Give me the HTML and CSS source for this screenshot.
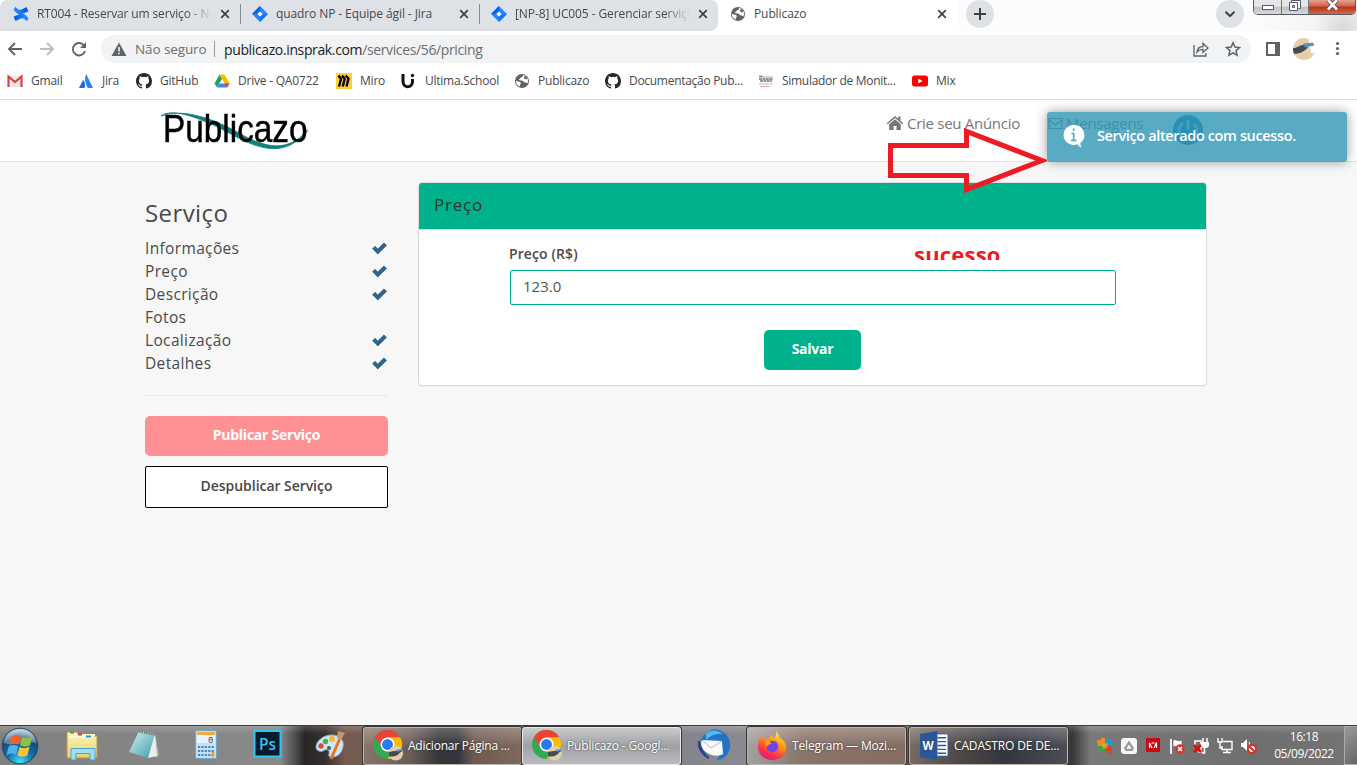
FILE: index.html
```html
<!DOCTYPE html>
<html lang="pt-BR">
<head>
<meta charset="utf-8">
<title>Publicazo</title>
<link rel="stylesheet" href="styles.css">
</head>
<body>
<svg class="defs" width="0" height="0">
  <defs>
    <linearGradient id="jg" x1="0" y1="0" x2="1" y2="1"><stop offset="0" stop-color="#0052cc"/><stop offset="1" stop-color="#2684ff"/></linearGradient>
    <linearGradient id="cg" x1="0" y1="0" x2="1" y2="0"><stop offset="0" stop-color="#0052cc"/><stop offset=".7" stop-color="#2684ff"/></linearGradient>
    <linearGradient id="cg2" x1="1" y1="0" x2="0" y2="0"><stop offset="0" stop-color="#0052cc"/><stop offset=".7" stop-color="#2684ff"/></linearGradient>
    <linearGradient id="folder" x1="0" y1="0" x2="0" y2="1"><stop offset="0" stop-color="#fdf6c4"/><stop offset="1" stop-color="#e8cf68"/></linearGradient>
    <linearGradient id="note" x1="0" y1="0" x2="1" y2="1"><stop offset="0" stop-color="#d5f1f4"/><stop offset="1" stop-color="#3f9bab"/></linearGradient>
    <radialGradient id="orb" cx=".5" cy=".95" r=".9"><stop offset="0" stop-color="#3fe0ff"/><stop offset=".4" stop-color="#1272ad"/><stop offset=".75" stop-color="#174a78"/><stop offset="1" stop-color="#a9c9de"/></radialGradient>
    <linearGradient id="fox" x1=".8" y1="0" x2=".3" y2="1"><stop offset="0" stop-color="#fff44f"/><stop offset=".4" stop-color="#ff980e"/><stop offset=".75" stop-color="#ff3647"/><stop offset="1" stop-color="#e31587"/></linearGradient>
    <symbol id="jira" viewBox="0 0 16 16"><path d="M8 0l8 8-8 8-8-8z" fill="#2684ff"/><path d="M8 0v5L5 8H0zM8 16v-5l3-3h5z" fill="url(#jg)"/><path d="M8 5.400L10.600 8 8 10.600 5.400 8z" fill="#fff"/></symbol>
    <symbol id="close" viewBox="0 0 10 10"><path d="M1.200 1.200l7.600 7.600M8.800 1.200L1.200 8.800" stroke="#3c4043" stroke-width="1.700"/></symbol>
    <symbol id="globe" viewBox="0 0 16 16"><circle cx="8" cy="8" r="7" fill="#5f6368"/><path d="M9.500 1.800c-.5 1.700-1 2.200-2.600 2.400-.3 1.300-.9 1.500-1.800 1.700-.2 1.400 0 1.600 1.600 1.600 1.500.1 3 .3 3.100 1.800 1.300 0 2.700.2 3.400 1.300A6 6 0 0 0 9.500 1.800z" fill="#fff"/><path d="M10.800 2.600c-.1 1.400-1.100 1.800-.9 2.600 1 .4 1.600 1.200 3.600 1A6 6 0 0 0 10.800 2.600z" fill="#5f6368"/><path d="M2 7.700c1.600.6 3.300.7 4.300 1.600.9.900.5 2-.4 2.600-.2.700-.2 1.200.2 1.800A6.100 6.100 0 0 1 2 7.700z" fill="#fff"/></symbol>
    <symbol id="github" viewBox="0 0 16 16"><path fill="#24292f" d="M8 0C3.580 0 0 3.580 0 8c0 3.540 2.290 6.530 5.470 7.590.4.070.55-.17.55-.38 0-.19-.01-.82-.01-1.490-2.010.37-2.530-.49-2.690-.94-.09-.23-.48-.94-.82-1.130-.28-.15-.68-.52-.01-.53.63-.01 1.080.58 1.230.82.72 1.210 1.870.87 2.330.66.07-.52.28-.87.51-1.070-1.780-.2-3.640-.89-3.640-3.950 0-.87.31-1.590.82-2.150-.08-.2-.36-1.020.08-2.120 0 0 .67-.21 2.200.82a7.400 7.400 0 0 1 4 0c1.530-1.040 2.200-.82 2.200-.82.44 1.100.16 1.920.08 2.120.51.56.82 1.270.82 2.150 0 3.070-1.870 3.750-3.650 3.950.29.25.54.73.54 1.480 0 1.070-.01 1.930-.01 2.200 0 .21.15.46.55.38A8 8 0 0 0 16 8c0-4.420-3.580-8-8-8z"/></symbol>
    <symbol id="check" viewBox="0 0 14 12"><path d="M.6 6.200l2.200-2.200 2.600 2.500L11.200.8l2.300 2.300-8.100 8z" fill="#33658a" stroke="#33658a" stroke-width=".8" stroke-linejoin="round"/></symbol>
    <symbol id="chrome" viewBox="0 0 32 32"><circle cx="15" cy="15" r="15" fill="#34a853"/><path d="M2 7.500A15 15 0 0 1 28 7.500L15 9l-6 8z" fill="#ea4335"/><path d="M28 7.500A15 15 0 0 1 15 30l6-11.500L15 7.500z" fill="#fbbc04"/><circle cx="15" cy="15" r="7.200" fill="#fff"/><circle cx="15" cy="15" r="5.600" fill="#2979f2"/><circle cx="23.500" cy="24" r="7.500" fill="#e3cfac"/><path d="M16 23c4-2 8-1 14-3v2c-4 2-4 5-8 5-2 0-4 1-5.500 0z" fill="#3e4b58"/><path d="M24 20.500l6-1v2l-5 1z" fill="#5c92c4"/></symbol>
  </defs>
</svg>

<div class="tabstrip">
  <div class="tabs-inactive">
    <div class="tab tab-first">
      <svg class="i16" viewBox="0 0 16 16"><path d="M2.600.8C4.500 3.800 6.500 4.300 9 3.200L13.400 1l2 4.200-5 2.300C6 9.400 2.600 7.500.5 3.200z" fill="url(#cg2)"/><path d="M13.400 15.200c-1.900-3-3.900-3.500-6.400-2.400L2.600 15l-2-4.200 5-2.300c4.400-1.900 7.800 0 9.900 4.300z" fill="url(#cg)"/></svg>
      <span class="tab-title fade t1">RT004 - Reservar um serviço - Ne</span>
      <svg class="i10"><use href="#close"/></svg>
    </div>
    <div class="tab">
      <svg class="i16"><use href="#jira"/></svg>
      <span class="tab-title">quadro NP - Equipe ágil - Jira</span>
      <svg class="i10"><use href="#close"/></svg>
    </div>
    <div class="tab">
      <svg class="i16"><use href="#jira"/></svg>
      <span class="tab-title fade">[NP-8] UC005 - Gerenciar serviço</span>
      <svg class="i10"><use href="#close"/></svg>
    </div>
  </div>
  <div class="tab tab-active">
    <svg class="i16"><use href="#globe"/></svg>
    <span class="tab-title">Publicazo</span>
    <svg class="i10"><use href="#close"/></svg>
  </div>
  <div class="strip-rest">
    <svg class="round" viewBox="0 0 28 28"><circle cx="14" cy="14" r="14" fill="#dee1e6"/><path d="M14 8v12M8 14h12" stroke="#3c4043" stroke-width="2"/></svg>
    <svg class="round chevron" viewBox="0 0 28 28"><circle cx="14" cy="14" r="14" fill="#dee1e6"/><path d="M9.500 11.700l4.500 4.500 4.500-4.500" fill="none" stroke="#3c4043" stroke-width="2"/></svg>
    <div class="win-controls">
      <span class="win-btn wmin"><svg width="12" height="15" viewBox="0 0 12 15"><rect x=".5" y="5.500" width="11" height="4" fill="#fff" stroke="#565b6b"/></svg></span>
      <span class="win-btn wmax"><svg width="12" height="15" viewBox="0 0 12 15"><path d="M2.500 2V.5h9v8h-2" fill="#fff" stroke="#565b6b"/><path d="M.5 2.500h8v8h-8z" fill="#fff" stroke="#565b6b"/><path d="M3.500 5.500h2v2h-2z" fill="#ccc" stroke="#565b6b"/></svg></span>
      <span class="win-btn wclose"><svg width="13" height="15" viewBox="0 0 13 15"><path d="M2 0l9 9.500M11 0L2 9.500" stroke="#5c4a56" stroke-width="4.500"/><path d="M2 0l9 9.500M11 0L2 9.500" stroke="#fff" stroke-width="2.600"/></svg></span>
    </div>
  </div>
</div>

<div class="toolbar">
  <svg class="nav" viewBox="0 0 96 36"><g fill="none" stroke-width="1.900"><path d="M22 18H9.500M15 12l-6 6 6 6" stroke="#5f6368"/><path d="M40 18h12.500M47 12l6 6-6 6" stroke="#babcbe"/><path d="M84 14.500A6.200 6.200 0 1 0 85 20" stroke="#5f6368"/></g><path d="M86 11v6h-6z" fill="#5f6368"/></svg>
  <div class="omnibox">
    <svg class="warn" viewBox="0 0 16 14"><path d="M8 .5L15.500 14H.5z" fill="#5f6368"/><path d="M8 5v4.500M8 10.700v1.500" stroke="#fff" stroke-width="1.500"/></svg>
    <span class="insecure">Não seguro</span><span class="divider"></span>
    <span class="url"><b>publicazo.insprak.com</b>/services/56/pricing</span>
    <svg class="omni-actions" viewBox="0 0 48 18"><g fill="none" stroke="#5f6368" stroke-width="1.300"><path d="M1 5v11h12v-3"/><path d="M4 12c.5-4 3-5.500 6-5.500V3.300l5 4.600-5 4.400V9.300c-2.600 0-4.500.7-6 2.700z"/><path d="M40 2.800l1.900 4.300 4.600.4-3.500 3.100 1.100 4.600-4.100-2.400-4.100 2.400 1.100-4.600-3.500-3.100 4.600-.4z" stroke-width="1.500"/></g></svg>
  </div>
  <svg class="toolbar-end" viewBox="0 0 90 26"><path d="M2 6h14v14H2zM4 8v10h7V8z" fill="#5f6368" fill-rule="evenodd"/><clipPath id="av"><circle cx="40" cy="13" r="11"/></clipPath><g clip-path="url(#av)"><path d="M28 1h24v24H28z" fill="#e4cfaa"/><path d="M44 1h10v16h-7z" fill="#fff"/><path d="M28 12c5 1 8-4 14-3l2 2c-3 4-7 7-16 7z" fill="#454b50"/><path d="M39 7.500l11-1v3l-9 2z" fill="#5d91c4"/></g><g fill="#5f6368"><circle cx="73.500" cy="7.500" r="1.600"/><circle cx="73.500" cy="12.500" r="1.600"/><circle cx="73.500" cy="17.500" r="1.600"/></g></svg>
</div>

<div class="bookmarks">
  <div class="bm"><svg class="i16" viewBox="0 0 16 16"><path d="M1 3h14v11H1z" fill="#e9e9e9"/><path d="M1.500 14V3.500L8 9l6.500-5.500V14" fill="none" stroke="#d9453a" stroke-width="2.200"/></svg><span>Gmail</span></div>
  <div class="bm"><svg class="i16" viewBox="0 0 16 16"><path d="M8.200 1L15 15H9.800C6.500 9.500 6.500 5 8.200 1z" fill="#2684ff"/><path d="M5 7c2.200 2.300 2.500 5 1.500 8H1z" fill="#1868db"/></svg><span>Jira</span></div>
  <div class="bm"><svg class="i16"><use href="#github"/></svg><span>GitHub</span></div>
  <div class="bm"><svg class="i16" viewBox="0 0 16 16"><path d="M5.500 1.500L.5 10.500 3 14.500 8 6z" fill="#1ea362"/><path d="M5.500 1.500h5l5 9h-5z" fill="#ffba00"/><path d="M5.500 10.500h10L13 14.500H3z" fill="#4285f4"/><path d="M10.500 10.500h5L13 14.500z" fill="#ea4335"/></svg><span>Drive - QA0722</span></div>
  <div class="bm"><svg class="i16" viewBox="0 0 16 16"><path d="M0 0h16v16H0z" fill="#ffd02f"/><path d="M2.500 2.500L5 6 3 13.500M6 2.500L8.700 6l-2 7.500M9.500 2.500l3 3-2 8" fill="none" stroke="#050038" stroke-width="2.400"/></svg><span>Miro</span></div>
  <div class="bm"><svg class="i16" viewBox="0 0 16 16"><path d="M3 1v7.500c0 7 9.500 7 9.500 0V6" fill="none" stroke="#111" stroke-width="3"/><circle cx="12.500" cy="2.500" r="1.700" fill="#111"/></svg><span class="roomy">Ultima.School</span></div>
  <div class="bm"><svg class="i16"><use href="#globe"/></svg><span>Publicazo</span></div>
  <div class="bm"><svg class="i16"><use href="#github"/></svg><span class="tight">Documentação Pub...</span></div>
  <div class="bm"><svg class="i16" viewBox="0 0 16 16"><path d="M1 3.500h4M1 6h14M2 8h12" stroke="#777" stroke-width="1.500" stroke-dasharray="3 .4"/><path d="M5 4h10" stroke="#aaa"/><path d="M1 11h13M2 13.500h10" stroke="#dba5a5" stroke-dasharray="5 .5"/></svg><span class="tight">Simulador de Monit...</span></div>
  <div class="bm"><svg class="i16" viewBox="0 0 16 16"><rect y="2.500" width="16" height="11" rx="2.500" fill="#f00"/><path d="M6.300 5.500v5L10.500 8z" fill="#fff"/></svg><span>Mix</span></div>
</div>

<div class="page">
  <header class="site-header">
    <div class="logo">
      <svg class="swoosh" viewBox="0 0 152 44"><path d="M1 6C12-4 46 10 72 24 102 41 128 48 150 20 128 44 106 38 78 22 50 6 18-2 1 6z" fill="#0b827e" stroke="#0b827e" stroke-width=".8"/></svg>
      <span>Publicazo</span>
    </div>
    <nav class="site-nav">
      <a class="nav-link"><svg width="18" height="16" viewBox="0 0 18 16"><path d="M9 1L.7 8.200l1 1.100L9 3l7.300 6.300 1-1.100L14.500 5.700V1.500h-2.200v2.300z" fill="#777"/><path d="M3.200 9.200L9 4.300l5.800 4.900V15h-4.300v-4h-3v4H3.200z" fill="#777"/></svg><span class="announce">Crie seu Anúncio</span></a>
      <a class="nav-link"><svg width="15" height="16" viewBox="0 0 15 16"><path d="M1 3.500h13v10H1zM1 5l6.500 5L14 5" fill="none" stroke="#777" stroke-width="1.200"/></svg><span class="messages">Mensagens</span></a>
      <svg class="avatar" viewBox="0 0 30 30"><circle cx="15" cy="15" r="15" fill="#0a78b8"/><path d="M10 8a9 9 0 1 0 11 1M15 5v10" fill="none" stroke="#8fc4e0" stroke-width="3"/></svg>
    </nav>
  </header>
  <main class="content">
    <aside class="sidebar">
      <h3>Serviço</h3>
      <ul>
        <li>Informações<svg><use href="#check"/></svg></li>
        <li>Preço<svg><use href="#check"/></svg></li>
        <li>Descrição<svg><use href="#check"/></svg></li>
        <li>Fotos</li>
        <li>Localização<svg><use href="#check"/></svg></li>
        <li>Detalhes<svg><use href="#check"/></svg></li>
      </ul>
      <hr>
      <button class="btn publish">Publicar Serviço</button>
      <button class="btn unpublish">Despublicar Serviço</button>
    </aside>
    <section class="panel">
      <div class="panel-head">Preço</div>
      <form class="panel-body">
        <label>Preço (R$)</label>
        <input type="text" value="123.0">
        <button type="button" class="btn save">Salvar</button>
      </form>
    </section>
  </main>
</div>

<div class="toast"><svg width="22" height="26" viewBox="0 0 22 26"><path d="M10.500 1a10 10 0 1 0 4 19.200c1 2 2.500 3 4.500 3.600-1.300-1.500-1.700-3-1.500-5A10 10 0 0 0 10.500 1z" fill="#fff"/><path d="M10.700 4.500v2.500M8.500 9.500h2.200v6.500M8 16.300h5.500" fill="none" stroke="#58abc3" stroke-width="1.700"/></svg><span>Serviço alterado com sucesso.</span></div>
<svg class="arrow" viewBox="0 0 162 68"><path d="M5.500 18.500H81.500V4.500L157 33.500 81.500 62.500V48.500H5.500z" fill="none" stroke="#ed1c24" stroke-width="5"/></svg>
<div class="annotation"><span>sucesso</span></div>

<div class="taskbar">
  <svg class="start" viewBox="0 0 38 38"><circle cx="19" cy="19" r="17.800" fill="url(#orb)" stroke="#29445d"/><path d="M3 16C7-2 31-2 35 16 26 13 13 20 3 16z" fill="#fff" opacity=".3"/><path d="M10.500 9.500c3.500-2.200 6.500-2 9.500-.3L17.700 17.500c-3-1.500-6-1.500-9.500.3z" fill="#f0622d"/><path d="M21.300 9.900c3.500 1.800 6.300 1.700 10-.3l-2.300 8.600c-3.500 2-6.500 1.800-9.900 0z" fill="#8cc43f"/><path d="M7.800 19.300c3.500-1.800 6.300-1.700 9.500 0l-2.300 8.500c-3.200-1.700-6-1.600-9.500.1z" fill="#4ab5ec"/><path d="M18.700 19.900c3.500 1.800 6.300 1.700 9.900-.1l-2.300 8.500c-3.500 2-6.500 1.800-9.900 0z" fill="#fdc72f"/></svg>
  <div class="pinned">
    <svg viewBox="0 0 34 34"><path d="M2 3h10l1 2h9l1 2h9v22H2z" fill="url(#folder)" stroke="#b5983f"/><path d="M3 8h26M8 6h22" stroke="#fff8cf" stroke-width="2"/><path d="M5 3.500h4" stroke="#25a84a" stroke-width="2"/><path d="M13 5.500h4" stroke="#d8412c" stroke-width="2"/><path d="M21 7.500h5" stroke="#2792cf" stroke-width="2"/><path d="M6 31V19.500h24V31h-5v-6.500H11V31z" fill="#a5dcf5" stroke="#4ba5ce"/></svg>
    <svg viewBox="0 0 34 34"><path d="M13 2l15 2 4 22-3 3z" fill="#b9b29d"/><path d="M12 2l16 3-7 24L2 23z" fill="url(#note)"/><path d="M28 5l2 22-9 2z" fill="#e7f0ee"/><path d="M12 2.500l16 3" stroke="#6f7e82" stroke-width="2.500" stroke-dasharray="1.500 1"/></svg>
    <svg viewBox="0 0 34 34"><rect x="6.500" y="1.500" width="21" height="28" rx="1.500" fill="#c6dff1" stroke="#6fa4cc"/><path d="M8 3h18v3H8z" fill="#f7a941"/><path d="M8 6h18v8H8z" fill="#eaf4fb"/><text x="19" y="13.500" font-family="Liberation Mono" font-size="9" fill="#345">0</text><path d="M9 18h16M9 22h16M9 26h16" stroke="#4787bd" stroke-width="2.200" stroke-dasharray="2.200 1.200"/><path d="M24 23v5" stroke="#f29b2e" stroke-width="2.500"/></svg>
    <svg viewBox="0 0 34 34"><rect x="3.500" y="2" width="26" height="25.500" fill="#0a1c2c" stroke="#31c5f4" stroke-width="2"/><text x="8" y="21" font-family="Open Sans" font-weight="600" font-size="16" fill="#31c5f4" textLength="17" lengthAdjust="spacingAndGlyphs">Ps</text></svg>
    <svg viewBox="0 0 34 34"><path d="M17 6c9-1 15 5 13 12-1 7-7 11-13 10-3-2 1-5-2-7s-5 3-9 1C-1 20 5 7 17 6z" fill="#cfe6f5" stroke="#78a9cb"/><circle cx="8" cy="17" r="2.700" fill="#dc4a38"/><circle cx="12.500" cy="12.500" r="2.700" fill="#4fae43"/><circle cx="19" cy="10" r="3" fill="#eebb30"/><circle cx="16" cy="19" r="2" fill="#4b5b68"/><path d="M28 7L18 30" stroke="#e37522" stroke-width="3"/><path d="M25 2l7 2-4 7-4-2z" fill="#c99868"/></svg>
  </div>
  <div class="task t-a"><svg><use href="#chrome"/></svg><span>Adicionar Página ...</span></div>
  <div class="task t-b"><svg><use href="#chrome"/></svg><span class="open">Publicazo - Googl...</span></div>
  <svg class="bird" viewBox="0 0 34 34"><path d="M9 6C13 0 20 0 26 4c6 3 9 12 6 19-2 6-8 9-13 9 3-2 3-4 2-5L4 12c1-3 2-4 5-6z" fill="#2374c4"/><path d="M9 6c5-5 12-4 17 0-6-1-12 1-17 6z" fill="#55b7ef"/><path d="M5 12l20 1 1 13c-5 3-12 2-17-2-4-3-6-7-4-12z" fill="#fafafa"/><path d="M5 12l9 8 11-7" fill="none" stroke="#bbb"/><path d="M2 13c-1 8 4 14 10 17-6-4-9-10-10-17z" fill="#24439a" stroke="#24439a" stroke-width="2"/></svg>
  <div class="task t-c"><svg viewBox="0 0 32 32"><path d="M20 1c2 3 3 5 3 7 5 2 8 7 7 13-1 6-7 10-14 10C7 31 1 25 1 17c0-5 2-8 3-11l3 4c2-1 3-1 5-1 2-1 2-3 2-4 2 1 3 3 4 4 1-2 2-5 2-8z" fill="url(#fox)"/><circle cx="16" cy="17" r="6" fill="#7542e4"/><path d="M8 12c3-2 6 0 7 2-2 1-4 1-5 4z" fill="#ff9a1f"/></svg><span>Telegram — Mozi...</span></div>
  <div class="task t-d"><svg viewBox="0 0 32 32"><path d="M16 4h14v23H16z" fill="#fff" stroke="#2b579a"/><path d="M19 8h9M19 12h9M19 16h9M19 20h9M19 24h9" stroke="#2b579a" stroke-width="1.500"/><path d="M1 4l18-3v30L1 28z" fill="#2b579a"/><text x="3.500" y="20.500" font-family="Open Sans" font-weight="700" font-size="12" fill="#fff">W</text></svg><span>CADASTRO DE DE...</span></div>
  <div class="tray">
    <svg viewBox="0 0 16 16"><path d="M0 2h4V0h4v8H1z" fill="#f08a24"/><path d="M8 1l7 1v3h1v3H8z" fill="#1f9bc9"/><path d="M8 8h7v3l-1 5h-3v-3H8z" fill="#d8422f"/><path d="M0 8h8v6H2v-3H0z" fill="#3ca345"/><path d="M5 6l6-1-1 5-4 1z" fill="#e8b32c" opacity=".7"/></svg>
    <svg viewBox="0 0 16 16"><rect width="16" height="16" rx="3" fill="#f6f6f6"/><path d="M8 4.500l3.800 5.800-1 1.500H5.200l-1-1.500z" fill="none" stroke="#999" stroke-width="2.200"/></svg>
    <svg viewBox="0 0 16 16"><path d="M1 0h14v14H1z" fill="#c9090f"/><path d="M4.500 10V5l2.500 5M11.500 10V4.500L9 10M6.500 5h3" fill="none" stroke="#fff" stroke-width="1.200"/></svg>
    <svg viewBox="0 0 16 16"><path d="M2 1v15" stroke="#eee" stroke-width="2"/><path d="M4 2c3-1 5 2 9 0v7c-3 1-6-2-9 0z" fill="#fff" stroke="#555" stroke-width=".6"/><circle cx="11" cy="11" r="4.700" fill="#d9342b"/><path d="M9 9l4 4M13 9l-4 4" stroke="#fff" stroke-width="1.500"/></svg>
    <svg viewBox="0 0 16 16"><path d="M2 9V3h6v11H5M10 0v5M14 0v5M11.500 9v6H9" fill="none" stroke="#fff" stroke-width="1.500"/><path d="M8 4h8v4l-2 2h-4L8 8z" fill="#fff"/><path d="M1 7l7 7M8 7l-7 7" stroke="#e20b0b" stroke-width="2.500"/></svg>
    <svg viewBox="0 0 16 16"><path d="M6 3.500h9v8H5V8M10 12v2.500M6 14.500h8M1 0v4h4V0M3 4v6h2" fill="none" stroke="#fff" stroke-width="1.400"/></svg>
    <svg viewBox="0 0 16 16"><path d="M0 5h2l4-4v12l-4-4H0z" fill="#fff"/><path d="M8 4c1 1.500 1 3 0 5" fill="none" stroke="#fff"/><circle cx="11" cy="11" r="4" fill="#fff" stroke="#d72f28" stroke-width="2"/><path d="M8.500 8.500l5 5" stroke="#d72f28" stroke-width="2"/></svg>
  </div>
  <div class="clock"><span>16:18</span><span>05/09/2022</span></div>
  <div class="show-desktop"></div>
</div>
</body>
</html>
```
FILE: styles.css
```css
* { box-sizing: border-box; }
body {
  margin: 0; width: 1357px; height: 765px; overflow: hidden; position: relative;
  font-family: "Open Sans", "Noto Sans", sans-serif; background: #f7f7f7;
  display: flex; flex-direction: column;
}
svg { display: block; flex: none; }
.defs { position: absolute; }
.i16 { width: 16px; height: 16px; }
.i10 { width: 10px; height: 10px; }

.tabstrip { height: 31px; display: flex; background: #fff; }
.tabs-inactive { width: 718px; display: flex; background: #dee1e6; border-radius: 7px 7px 8px 0; }
.tab {
  width: 239px; height: 28px; padding: 0 10px 0 12px; display: flex; align-items: center; gap: 8px;
  font-size: 12px; letter-spacing: -.1px; color: #45494d; white-space: nowrap;
}
.tab-first { width: 240px; padding-left: 13px; }
.tab + .tab { position: relative; }
.tab + .tab::before { content: ""; position: absolute; left: 0; top: 4px; width: 1px; height: 20px; background: #888c91; }
.tab-title { width: 175px; overflow: hidden; flex: none; line-height: 16px; padding-bottom: 1px; }
.t1 { letter-spacing: -.15px; }
.fade { -webkit-mask-image: linear-gradient(90deg, #000 85%, transparent); mask-image: linear-gradient(90deg, #000 85%, transparent); }
.tab-active { width: 240px; }
.strip-rest { flex: 1; display: flex; border-radius: 0 0 0 8px; background: radial-gradient(circle at 385px 28px, #d9d9d9 0, #f5f5f5 30px, transparent 90px), #fcfcfc; padding-left: 8px; }
.round { width: 28px; height: 28px; }
.chevron { margin-left: 222px; }
.win-controls { display: flex; height: 15px; margin-left: 9px; border: 1px solid #565b62; border-top: 0; border-radius: 0 0 5px 5px; overflow: hidden; width: 103px; }
.win-btn { display: flex; justify-content: center; background: linear-gradient(#e6e6e8 45%, #bdbfc3 50%, #d9dadd); }
.wmin { width: 28px; border-right: 1px solid #777; }
.wmax { width: 27px; border-right: 1px solid #777; }
.wclose { flex: 1; background: linear-gradient(#e5a392, #d25f45 45%, #b9301b 50%, #d4694d); }

.toolbar { height: 37px; display: flex; align-items: center; background: #fff; padding-bottom: 1px; }
.nav { width: 96px; height: 36px; }
.omnibox { width: 1150px; height: 28px; margin-left: 5px; border-radius: 14px; background: #f1f3f4; display: flex; align-items: center; font-size: 14px; color: #6b6f73; padding: 0 10px; }
.warn { width: 16px; height: 14px; }
.insecure { margin-left: 8px; width: 72px; font-size: 13.500px; letter-spacing: -.1px; white-space: nowrap; }
.divider { width: 1px; height: 16px; margin: 0 9px 0 7px; background: #999; }
.url { flex: 1; letter-spacing: -.37px; }
.url b { font-weight: 400; color: #202124; }
.omni-actions { width: 48px; height: 18px; }
.toolbar-end { width: 90px; height: 26px; margin-left: 13px; }

.bookmarks { height: 32px; padding: 0 0 6px 7px; display: grid; grid-template-columns: 71px 58px 78px 122px 64px 114px 91px 153px 154px 100px; align-items: center; background: #fff; border-bottom: 1px solid #dadce0; }
.bm { display: flex; align-items: center; gap: 8px; font-size: 12px; letter-spacing: -.22px; color: #45494d; white-space: nowrap; }
.bm .tight { letter-spacing: -.29px; }
.bm .roomy { padding-left: 1px; letter-spacing: -.25px; }

.page { height: 625px; color: #4a4a4a; }
.site-header { height: 62px; display: flex; background: #fff; border-bottom: 1px solid #e4e4e4; padding-left: 160px; }
.logo { position: relative; width: 150px; height: 50px; padding: 6px 0 0 3px; margin-right: 576px; font: 39px/46px "Liberation Sans", sans-serif; color: #000; }
.logo span { position: relative; display: inline-block; transform: scaleX(.855); transform-origin: 0 50%; -webkit-text-stroke: .5px #000; }
.swoosh { position: absolute; left: 0; top: 9px; width: 150px; height: 46px; }
.site-nav { display: flex; align-items: center; height: 46px; font-size: 15px; color: #777; }
.nav-link { display: flex; align-items: center; gap: 3px; white-space: nowrap; }
.announce { width: 141px; letter-spacing: -.28px; }
.messages { width: 107px; letter-spacing: -.25px; }
.avatar { width: 30px; height: 30px; margin-top: 14px; }

.content { display: flex; gap: 30px; padding: 20px 0 0 145px; }
.sidebar { width: 243px; padding-top: 15px; display: flex; flex-direction: column; }
.sidebar h3 { margin: 0; font-size: 24px; line-height: 32px; font-weight: 400; letter-spacing: .4px; }
.sidebar ul { list-style: none; margin: 8px 0 0; padding: 0; }
.sidebar li { height: 23px; line-height: 23px; font-size: 15.500px; letter-spacing: .35px; display: flex; justify-content: space-between; align-items: center; padding-right: 1px; }
.sidebar li svg { width: 15px; height: 13px; margin-top: -1px; }
.sidebar hr { width: 100%; border: 0; border-top: 1px solid #eaeaea; margin: 20px 0; }
.btn { font: 700 14px "Open Sans", sans-serif; letter-spacing: -.25px; border: 0; border-radius: 5px; padding: 0 0 3px; }
.publish { height: 40px; background: #ff9194; color: #fff; }
.unpublish { height: 42px; margin-top: 10px; background: #fff; color: #484848; border: 1px solid #000; border-radius: 2px; font-weight: 600; letter-spacing: -.05px; }
.panel { width: 789px; height: 204px; border: 1px solid #dcdcdc; border-radius: 4px; background: #fff; overflow: hidden; box-shadow: 0 1px 1px rgba(0,0,0,.05); }
.panel-head { height: 47px; border-bottom: 1px solid #ddd; background: #00b28b; padding-left: 15px; font-size: 17px; letter-spacing: .8px; line-height: 44px; color: #333; }
.panel-body { padding: 14px 90px 0 91px; display: flex; flex-direction: column; }
.panel-body label { font-size: 14px; line-height: 20px; font-weight: 600; letter-spacing: .1px; margin-left: -1px; }
.panel-body input { height: 35px; margin-top: 6px; border: 1px solid #00b28b; border-radius: 2px; padding: 0 12px 3px; font: 15px "Open Sans", sans-serif; color: #555; }
.save { width: 97px; height: 40px; margin: 25px 0 0 254px; background: #00b28b; color: #fff; }

.toast { position: absolute; left: 1047px; top: 112px; width: 300px; height: 50px; border-radius: 3px; background: rgba(47,150,180,.8); box-shadow: 0 0 12px #999; color: #fff; display: flex; align-items: center; gap: 12px; padding-left: 16px; font-size: 14.500px; font-weight: 600; letter-spacing: -.37px; white-space: nowrap; }
.toast span { margin-top: -3px; }
.arrow { position: absolute; left: 885px; top: 127px; width: 162px; height: 68px; }
.annotation { position: absolute; left: 914px; top: 246px; width: 100px; height: 14px; overflow: hidden; color: #ed1c24; font: 700 22px/16px "Open Sans", sans-serif; letter-spacing: .2px; }

.taskbar { height: 40px; display: flex; align-items: center; color: #fff; border-top: 1px solid #3e3b3e; background: linear-gradient(rgba(255,255,255,.18), transparent 8px), linear-gradient(90deg, #808080 0, #898989 280px, #292526 305px, #37302e 325px, #755b50 345px, #715c52 365px, #84868c 690px, #8a8a90 745px, #695850 905px, #55565a 1060px, #343436 1072px, #797979 1090px, #6f6f6f 1250px, #747474 1357px); }
.start { width: 38px; height: 38px; margin-left: 1px; }
.pinned { display: flex; width: 324px; padding-left: 12px; }
.pinned svg { width: 34px; height: 34px; margin: 0 14px; }
.task { width: 159px; height: 38px; display: flex; align-items: center; gap: 4px; padding: 0 0 1px 9px; border: 1px solid #bbb5b2; border-radius: 3px; font-size: 12px; letter-spacing: -.22px; white-space: nowrap; box-shadow: 0 0 0 1px #3a3432; text-shadow: 0 0 2px #333; }
.task svg { width: 31px; height: 31px; }
.t-a { background: linear-gradient(rgba(255,255,255,.25), transparent 50%), linear-gradient(90deg, #8a7468, #6b5b55 30%, #34343a 48%, #35363c 60%, #705a50 70%, #7e695f); }
.t-b { background: linear-gradient(#c9cacd, #a0a1a5 50%, #bbbcc0); border-color: #e9e9ea; }
.t-b .open { letter-spacing: -.15px; }
.bird { width: 34px; height: 34px; margin: 0 16px 2px; }
.t-c { background: linear-gradient(rgba(255,255,255,.25), transparent 50%), linear-gradient(90deg, #a3a0a0, #8a7469 35%, #846d62); margin-right: 3px; letter-spacing: -.15px; }
.t-d { letter-spacing: -.15px; background: linear-gradient(rgba(255,255,255,.25), transparent 50%), linear-gradient(90deg, #776a64, #4f4946 30%, #33363f 60%, #4b4d54); }
.tray { display: flex; gap: 8px; margin-left: 29px; }
.tray svg { width: 16px; height: 16px; }
.clock { width: 74px; margin-left: 10px; display: flex; flex-direction: column; align-items: center; font-size: 12px; line-height: 17px; letter-spacing: -.4px; padding-bottom: 1px; }
.show-desktop { width: 13px; height: 39px; margin-left: auto; border: 1px solid #aaa; border-right: 0; background: linear-gradient(135deg, #999, #666); }
```
